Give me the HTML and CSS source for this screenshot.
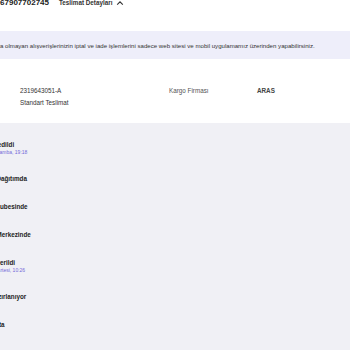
FILE: index.html
```html
<!DOCTYPE html>
<html lang="tr">
<head>
    <meta charset="UTF-8">
    <meta name="viewport" content="width=device-width, initial-scale=1.0">
    <title>Teslimat Detayları</title>
    <link rel="stylesheet" href="styles.css">
</head>
<body>
    <div class="page">
        <!-- sipariş başlığı -->
        <div class="head">
            <span class="order-no">10067907702745</span>
            <span class="toggle">Teslimat Detayları
                <svg width="8" height="6" viewBox="0 0 8 6"><path d="M1.2 4.6 L4 1.8 L6.8 4.6" fill="none" stroke="#333" stroke-width="1.1"/></svg>
            </span>
        </div>

        <div class="notice">
            Fatura olmayan alışverişlerinizin iptal ve iade işlemlerini sadece web sitesi ve mobil uygulamamız üzerinden yapabilirsiniz.
        </div>

        <!-- kargo bilgisi -->
        <div class="shipment">
            <div class="ship-col">
                <div>2319643051-A</div>
                <div>Standart Teslimat</div>
            </div>
            <div class="ship-label">Kargo Firması</div>
            <div class="ship-value">ARAS</div>
        </div>

        <!-- teslimat adımları -->
        <ul class="timeline">
            <li class="step">
                <div class="step-title">Teslim edildi</div>
                <div class="step-date">Çarşamba, 19:18</div>
            </li>
            <li class="step"><div class="step-title">Kargo Dağıtımda</div></li>
            <li class="step"><div class="step-title">Kargo şubesinde</div></li>
            <li class="step"><div class="step-title">Kargo Merkezinde</div></li>
            <li class="step">
                <div class="step-title">Kargo verildi</div>
                <div class="step-date">Pazartesi, 10:26</div>
            </li>
            <li class="step"><div class="step-title">Koli Hazırlanıyor</div></li>
            <li class="step"><div class="step-title">Hazırlıkta</div></li>
        </ul>
    </div>
</body>
</html>
```

FILE: styles.css
```css
body {
    margin: 0;
    overflow: hidden;
    background-color: #f0f0f5;
    font-family: "Liberation Sans", Arial, sans-serif;
    color: #333;
}

/* sayfa kaydırılmış halde */
.page {
    margin: -5px 0 0 -30px;
}

/* başlık */
.head {
    background-color: #fff;
    height: 36px;
    display: flex;
    align-items: flex-start;
    gap: 10px;
}

.order-no {
    font-size: 8px;
    font-weight: bold;
    line-height: 16px;
    margin-left: 16.7px;
    color: #222;
}

.toggle {
    font-size: 6.3px;
    font-weight: bold;
    line-height: 16px;
    color: #333;
    display: flex;
    align-items: center;
    gap: 4px;
}

.notice {
    background-color: #eeeefa;
    height: 28px;
    display: flex;
    align-items: center;
    padding-left: 15.8px;
    font-size: 6.1px;
    color: #333;
    white-space: nowrap;
}

/* kargo */
.shipment {
    background-color: #fff;
    height: 64px;
    display: flex;
    align-items: flex-start;
    padding: 28px 0 0 50px;
    box-sizing: border-box;
    font-size: 6.3px;
    color: #333;
}

.ship-col {
    width: 149px;
    display: flex;
    flex-direction: column;
    gap: 5px;
}

.ship-label {
    width: 88px;
    color: #555;
}

.ship-value {
    font-weight: bold;
    color: #444;
}

/* adımlar */
.timeline {
    list-style: none;
    margin: 0;
    padding: 17px 0 0 6.5px;
}

.step {
    padding-bottom: 19px;
}

.step-title {
    font-size: 6.3px;
    font-weight: bold;
    color: #222;
    line-height: 9px;
}

.step-date {
    font-size: 5px;
    color: #7468d8;
    line-height: 6px;
    margin-left: 12.5px;
}
```
